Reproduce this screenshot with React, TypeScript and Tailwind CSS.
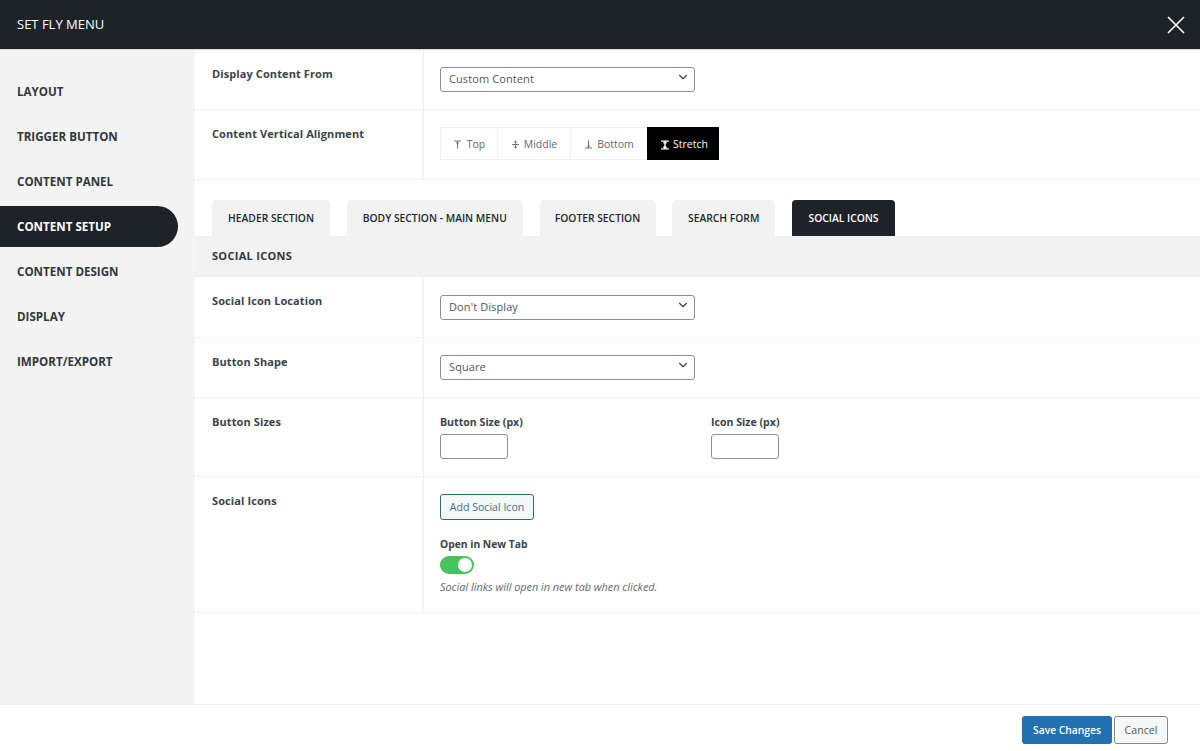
import React from "react";
import { ChevronDown } from "lucide-react";

const navItems = ["LAYOUT", "TRIGGER BUTTON", "CONTENT PANEL", "CONTENT SETUP", "CONTENT DESIGN", "DISPLAY", "IMPORT/EXPORT"];
const tabs = [
  { label: "HEADER SECTION", width: "w-[118px]" },
  { label: "BODY SECTION - MAIN MENU", width: "w-[176px]" },
  { label: "FOOTER SECTION", width: "w-[116px]" },
  { label: "SEARCH FORM", width: "w-[103px]" },
  { label: "SOCIAL ICONS", width: "w-[103px]", active: true },
];

function Row({ label, height, children }: { label: string; height: string; children: React.ReactNode }) {
  return (
    <div className={`flex border-b border-[#f3f3f3] ${height}`}>
      <div className="w-[229px] shrink-0 border-r border-[#eeeeee] pl-[17px] pt-[16px] text-[11px] font-bold leading-[16px] tracking-[0.1px] text-[#3c434a]">
        {label}
      </div>
      <div className="flex-1 pl-[16px] pt-[15px]">{children}</div>
    </div>
  );
}

function Select({ value }: { value: string }) {
  return (
    <div className="relative h-[25px] w-[255px]">
      <select
        defaultValue={value}
        className="h-full w-full appearance-none rounded-[3px] border border-[#8c8f94] bg-white pl-[8px] text-[11px] tracking-[0.1px] text-[#50575e]"
      >
        <option>{value}</option>
      </select>
      <ChevronDown size={14} strokeWidth={2} className="pointer-events-none absolute right-[5px] top-[5px] text-[#3c434a]" />
    </div>
  );
}

function AlignIcon({ kind }: { kind: "top" | "middle" | "bottom" | "stretch" }) {
  const stroke = kind === "stretch" ? "#ffffff" : "#70757a";
  const size = kind === "stretch" ? 10 : 9;
  return (
    <svg width={size} height={size} viewBox="0 0 9 9" fill="none" stroke={stroke} strokeWidth={kind === "stretch" ? 1.3 : 1}>
      {kind === "top" && <path d="M1 1h7M4.5 1v7.5M3 3h3" />}
      {kind === "middle" && <path d="M1 4.5h7M4.5 .5v8M3 2.5l1.5-1.5L6 2.500M3 6.500L4.500 8 6 6.500" />}
      {kind === "bottom" && <path d="M1 8h7M4.500 0.500V8M3 6h3" />}
      {kind === "stretch" && <path d="M1 1h7M1 8h7M4.500 1v7M3 2.500h3M3 6.500h3" />}
    </svg>
  );
}

function SizeField({ label, width }: { label: string; width: string }) {
  return (
    <div className={width}>
      <div className="mt-[1px] text-[10.600px] font-bold leading-[16px] text-[#3c434a]">{label}</div>
      <input className="mt-[4px] h-[25px] w-[68px] rounded-[3px] border border-[#8c8f94] bg-white" />
    </div>
  );
}

export default function App() {
  return (
    <div className="flex h-[751px] w-[1200px] flex-col overflow-hidden bg-white font-['Open_Sans',sans-serif]">
      <header className="flex h-[50px] shrink-0 items-center justify-between border-b border-[#d8d8d8] bg-[#1d2327] pl-[17px] pr-[14px]">
        <span className="text-[13px] text-white">SET FLY MENU</span>
        <svg width="20" height="20" viewBox="0 0 20 20" stroke="#ffffff" strokeWidth="1.6">
          <path d="M2 2l16 16M18 2L2 18" />
        </svg>
      </header>

      <div className="flex min-h-0 flex-1">
        <aside className="w-[195px] shrink-0 bg-[#f4f4f4] pr-[17px] pt-[19px]">
          {navItems.map((item) => {
            const active = item === "CONTENT SETUP";
            return (
              <div key={item} className="flex h-[45px] items-center">
                <div
                  className={`flex h-[41px] w-full items-center pl-[17px] text-[11.600px] font-bold ${
                    active ? "rounded-r-[21px] bg-[#1d2327] text-white" : "text-[#32373c]"
                  }`}
                >
                  {item}
                </div>
              </div>
            );
          })}
        </aside>

        <main className="min-w-0 flex-1">
          <Row label="Display Content From" height="h-[60px]">
            <Select value="Custom Content" />
          </Row>
          <Row label="Content Vertical Alignment" height="h-[70px]">
            <div className="mt-[2px] flex h-[33px] w-[280px] text-[10.500px] text-[#646970]">
              <div className="flex w-[58px] items-center justify-center gap-[5px] border border-[#f0f0f0] pt-[2px]"><AlignIcon kind="top" />Top</div>
              <div className="flex w-[73px] items-center justify-center gap-[4px] border-y border-r border-[#f0f0f0] pt-[2px]"><AlignIcon kind="middle" />Middle</div>
              <div className="flex w-[76px] items-center justify-center gap-[4px] border-y border-[#f0f0f0] pt-[2px]"><AlignIcon kind="bottom" />Bottom</div>
              <div className="flex w-[72px] items-center justify-center gap-[3px] bg-black pl-[2px] pt-[2px] font-medium text-white"><AlignIcon kind="stretch" />Stretch</div>
            </div>
          </Row>

          <div className="flex h-[56px] items-end gap-[16.750px] pl-[17px]">
            {tabs.map((tab) => (
              <div
                key={tab.label}
                className={`flex h-[36px] items-center justify-center rounded-t-[4px] pt-[2px] text-[10.300px] font-semibold ${tab.width} ${
                  tab.active ? "bg-[#1d2327] text-white" : "bg-[#f2f2f2] text-[#23282d]"
                }`}
              >
                {tab.label}
              </div>
            ))}
          </div>

          <div className="flex h-[41px] items-center bg-[#f2f2f2] pl-[17px] text-[11px] font-bold tracking-[0.3px] text-[#32373c]">
            SOCIAL ICONS
          </div>

          <Row label="Social Icon Location" height="h-[61px]">
            <div className="pt-[1px]">
              <Select value="Don't Display" />
            </div>
          </Row>
          <Row label="Button Shape" height="h-[60px]">
            <Select value="Square" />
          </Row>
          <Row label="Button Sizes" height="h-[79px]">
            <div className="flex">
              <SizeField label="Button Size (px)" width="w-[271px]" />
              <SizeField label="Icon Size (px)" width="w-[100px]" />
            </div>
          </Row>
          <Row label="Social Icons" height="h-[136px]">
            <button className="mt-[2px] block h-[26px] w-[94px] rounded-[3px] border border-[#2d6a7f] bg-[#f6f7f7] pt-[1px] text-[10.600px] text-[#3f7189]">
              Add Social Icon
            </button>
            <div className="mt-[16px] text-[10.300px] font-bold leading-[16px] text-[#3c434a]">Open in New Tab</div>
            <div className="mt-[4px] flex h-[18px] w-[34px] items-center justify-end rounded-full bg-[#46c35f] pr-[2px]">
              <div className="h-[14px] w-[14px] rounded-full bg-white" />
            </div>
            <p className="mt-[5px] text-[10.850px] italic leading-[15px] text-[#646970]">Social links will open in new tab when clicked.</p>
          </Row>
        </main>
      </div>

      <footer className="flex h-[47px] shrink-0 items-start justify-end gap-[2px] border-t border-[#eeeeee] pr-[32px] pt-[11px]">
        <button className="h-[28px] w-[90px] rounded-[3px] bg-[#2271b1] pt-[1px] text-[10.300px] font-semibold text-white">Save Changes</button>
        <button className="h-[28px] w-[54px] rounded-[3px] border border-[#7e8993] bg-[#f6f7f7] pt-[1px] text-[10.600px] text-[#50575e]">Cancel</button>
      </footer>
    </div>
  );
}
